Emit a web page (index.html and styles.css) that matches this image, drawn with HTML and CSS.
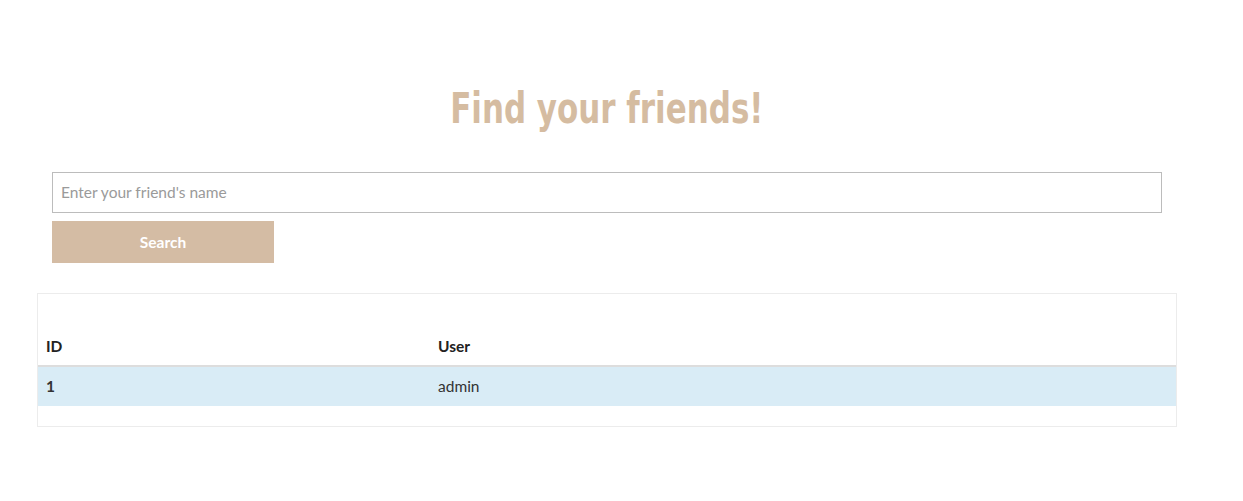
FILE: index.html
```html
<!DOCTYPE html>
<html>
<head>
<meta charset="utf-8">
<link rel="stylesheet" href="styles.css">
</head>
<body>
<div class="page">
  <h1 class="title"><span class="title-text">Find your friends!</span></h1>
  <form class="search">
    <input class="search-input" type="text" placeholder="Enter your friend's name">
    <button class="search-btn" type="button">Search</button>
  </form>
  <div class="results">
    <table class="table">
      <thead>
        <tr><th class="col-id">ID</th><th>User</th></tr>
      </thead>
      <tbody>
        <tr class="info"><td class="id">1</td><td>admin</td></tr>
      </tbody>
    </table>
  </div>
</div>
</body>
</html>
```

FILE: styles.css
```css
html, body {
  margin: 0;
  padding: 0;
  background: #fff;
}
body {
  font-family: Lato, "Open Sans", sans-serif;
  font-size: 15.5px;
  color: #333;
}
.page {
  width: 1140px;
  margin-left: 37px;
  padding-top: 84px;
}
.title {
  margin: 0;
  text-align: center;
  font-family: "DejaVu Sans", sans-serif;
  font-stretch: condensed;
  font-weight: bold;
  font-size: 43px;
  line-height: 48px;
  color: #d5bca1;
}
.title-text {
  display: inline-block;
  transform: scaleX(0.8);
}
.search {
  margin: 40px 15px 0;
  display: flex;
  flex-direction: column;
  align-items: flex-start;
  gap: 8px;
}
.search-input {
  box-sizing: border-box;
  width: 100%;
  height: 41px;
  border: 1px solid #bcbcbc;
  padding: 0 8px 1px;
  font-family: inherit;
  font-size: 15.5px;
  color: #333;
  outline: none;
}
.search-input::placeholder {
  color: #9a9a9a;
}
.search-btn {
  width: 222px;
  height: 42px;
  border: none;
  background: #d4bca4;
  color: #fff;
  font-family: inherit;
  font-weight: bold;
  font-size: 15.5px;
}
.results {
  margin-top: 30px;
  border: 1px solid #ececec;
  padding: 34px 0 20px;
}
.table {
  width: 100%;
  border-collapse: collapse;
}
.table th, .table td {
  text-align: left;
  padding: 8px;
  line-height: 21px;
  height: 21px;
}
.table th {
  border-bottom: 2px solid #dddddd;
  font-weight: bold;
  color: #222;
}
.col-id {
  width: 376px;
}
.table td.id {
  font-weight: bold;
}
.info td {
  background: #d9ecf6;
  padding-top: 9px;
  padding-bottom: 9px;
}
```
